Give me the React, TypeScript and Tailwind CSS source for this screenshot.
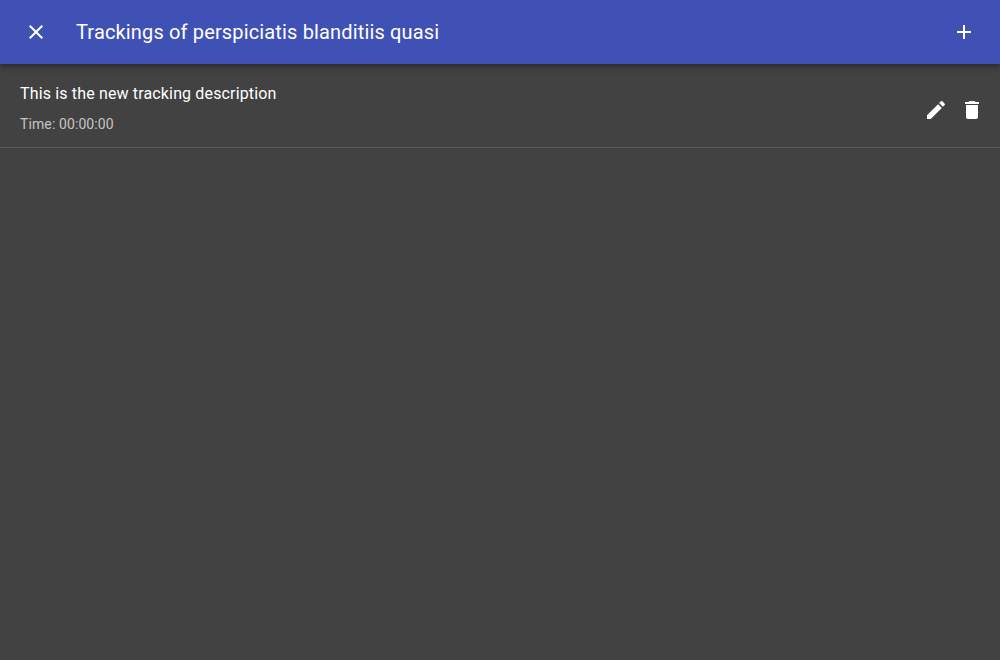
import type { ReactNode } from "react";

function Icon({ d }: { d: string }) {
  return (
    <svg viewBox="0 0 24 24" className="size-6 shrink-0 fill-white" aria-hidden="true">
      <path d={d} />
    </svg>
  );
}

const icons = {
  close: "M19 6.41L17.59 5 12 10.59 6.41 5 5 6.41 10.59 12 5 17.59 6.41 19 12 13.41 17.59 19 19 17.59 13.41 12z",
  add: "M19 13h-6v6h-2v-6H5v-2h6V5h2v6h6v2z",
  edit: "M3 17.25V21h3.75L17.81 9.94l-3.75-3.75L3 17.25zM20.71 7.04c.39-.39.39-1.02 0-1.41l-2.34-2.34c-.39-.39-1.02-.39-1.41 0l-1.83 1.83 3.75 3.75 1.83-1.83z",
  remove: "M6 19c0 1.1.9 2 2 2h8c1.1 0 2-.9 2-2V7H6v12zM19 4h-3.5l-1-1h-5l-1 1H5v2h14V4z",
};

function ToolbarButton({ label, children }: { label: string; children: ReactNode }) {
  return (
    <button aria-label={label} className="flex size-12 items-center justify-center rounded-full">
      {children}
    </button>
  );
}

export default function App() {
  return (
    <div className="flex h-screen flex-col bg-[#424242] font-[Roboto,sans-serif] text-white">
      <header className="z-10 flex h-16 shrink-0 items-center bg-[#3f51b5] px-3 shadow-[0_2px_4px_-1px_rgba(0,0,0,0.2),0_4px_5px_0_rgba(0,0,0,0.14),0_1px_10px_0_rgba(0,0,0,0.12)]">
        <ToolbarButton label="Close">
          <Icon d={icons.close} />
        </ToolbarButton>
        <h1 className="ml-4 flex-1 text-xl leading-8 font-normal tracking-[0.0075em]">
          Trackings of perspiciatis blanditiis quasi
        </h1>
        <ToolbarButton label="Add">
          <Icon d={icons.add} />
        </ToolbarButton>
      </header>
      <ul>
        <li className="flex h-21 items-start border-b border-[#595959] pt-4 pr-4 pl-5">
          <div className="flex-1">
            <p className="text-base leading-7 tracking-[0.00938em]">This is the new tracking description</p>
            <p className="mt-1.5 text-sm leading-5 tracking-[0.0075em] text-white/70">Time: 00:00:00</p>
          </div>
          <div className="mt-4.5 flex gap-3">
            <button aria-label="Edit">
              <Icon d={icons.edit} />
            </button>
            <button aria-label="Delete">
              <Icon d={icons.remove} />
            </button>
          </div>
        </li>
      </ul>
    </div>
  );
}
